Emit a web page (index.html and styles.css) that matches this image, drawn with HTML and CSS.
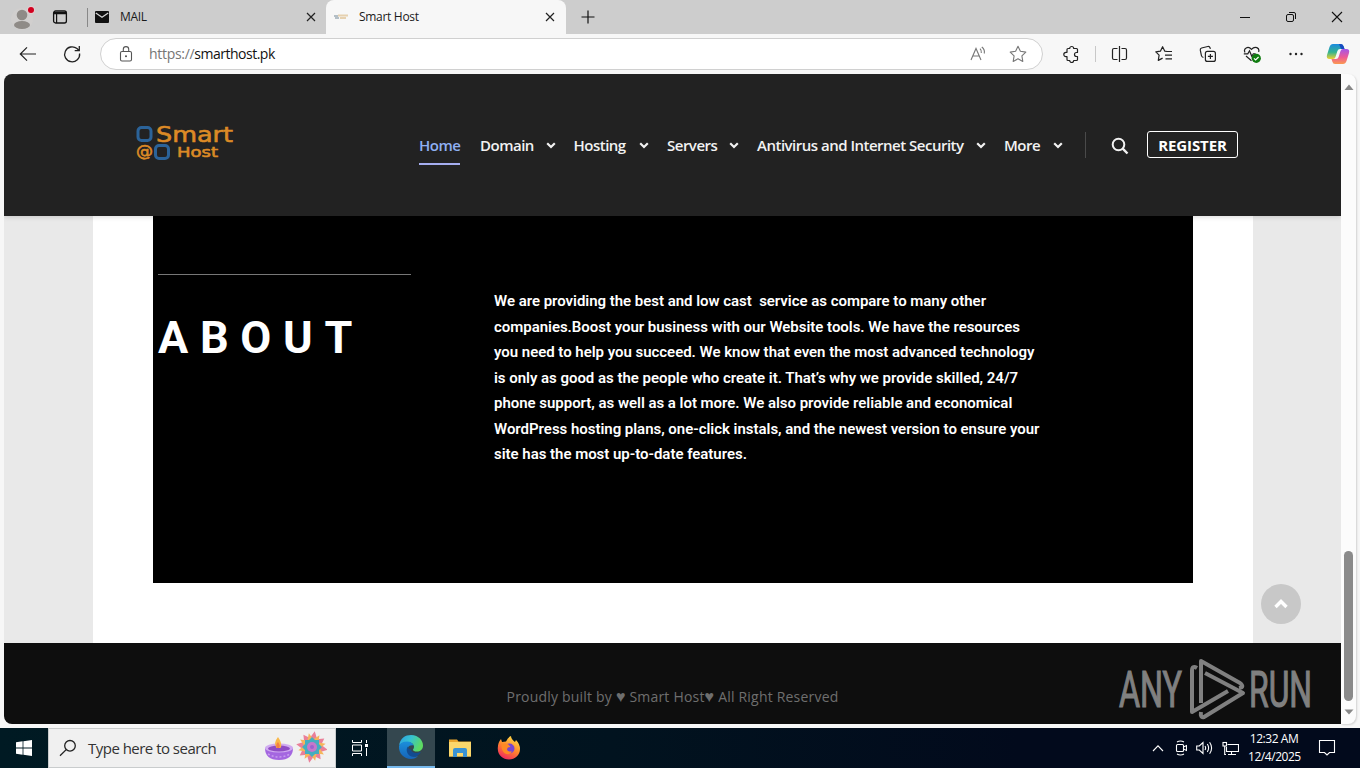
FILE: index.html
```html
<!DOCTYPE html>
<html lang="en">
<head>
    <meta charset="UTF-8">
    <meta name="viewport" content="width=device-width, initial-scale=1.0">
    <title>Smart Host</title>
    <link rel="stylesheet" href="styles.css">
</head>
<body>
    <div class="tabstrip">
        <svg class="avatar" width="26" height="26" viewBox="0 0 26 26">
            <circle cx="13" cy="13" r="11" fill="#d1cfce"/>
            <circle cx="13" cy="9" r="5.300" fill="#8f8b87"/>
            <ellipse cx="13" cy="19" rx="8" ry="4" fill="#8f8b87"/>
            <circle cx="22" cy="4" r="4" fill="#e3cdcf"/>
            <circle cx="22" cy="4" r="3" fill="#d1001f"/>
        </svg>
        <svg class="workspace" width="16" height="16" viewBox="0 0 16 16" fill="none" stroke="#111">
            <rect x="1.6" y="2" width="12.8" height="12" rx="2" stroke-width="1.3"/>
            <path d="M2 3.6h12M2 4.6h12M4.6 5v9" stroke-width="1.2"/>
        </svg>
        <div class="tab tab-mail">
            <svg width="14" height="12" viewBox="0 0 14 12"><path d="M1 0h12q1 0 1 1v10q0 1-1 1H1q-1 0-1-1V1q0-1 1-1z" fill="#111"/><path d="M.8 2l6.200 4.300L13.200 2" fill="none" stroke="#d5d5d5" stroke-width="1.300"/></svg>
            <span>MAIL</span>
            <svg class="close" width="10" height="10" viewBox="0 0 10 10"><path d="M1 1l8 8M9 1l-8 8" stroke="#222" stroke-width="1.2"/></svg>
        </div>
        <div class="tab tab-active">
            <svg width="16" height="8" viewBox="0 0 16 8"><path d="M0 3h4M1 5h4" stroke="#b4bfc6" stroke-width="2"/><path d="M4 2.500h10M6 5h6" stroke="#e6d1b0" stroke-width="2"/></svg>
            <span>Smart Host</span>
            <svg class="close" width="10" height="10" viewBox="0 0 10 10"><path d="M1 1l8 8M9 1l-8 8" stroke="#222" stroke-width="1.2"/></svg>
        </div>
        <svg class="new-tab" width="14" height="14" viewBox="0 0 14 14"><path d="M7 .5v13M.5 7h13" stroke="#111" stroke-width="1.2"/></svg>
        <div class="window-buttons">
            <svg width="12" height="12" viewBox="0 0 12 12"><path d="M1 6.500h10" stroke="#111"/></svg>
            <svg width="12" height="12" viewBox="0 0 12 12" fill="none" stroke="#111"><rect x="1.500" y="3.500" width="7" height="7" rx="1.500"/><path d="M4 1.500h5q1.500 0 1.500 1.500v5"/></svg>
            <svg width="12" height="12" viewBox="0 0 12 12"><path d="M1 1l10 10M11 1L1 11" stroke="#111" stroke-width="1.1"/></svg>
        </div>
    </div>

    <div class="toolbar">
        <svg width="20" height="20" viewBox="0 0 20 20" fill="none" stroke="#222" stroke-width="1.2"><path d="M18 10H2.500M9 3.300L2.300 10 9 16.700"/></svg>
        <svg class="reload" width="20" height="20" viewBox="0 0 20 20" fill="none" stroke="#222" stroke-width="1.3"><path d="M17.600 9.500A7.500 7.500 0 1 1 15 4.600l1.800 1.800M17.300 2v4.600h-4.600"/></svg>
        <div class="address">
            <svg width="14" height="16" viewBox="0 0 14 16" fill="none" stroke="#555" stroke-width="1.100"><rect x="1.500" y="5.500" width="11" height="9.500" rx="1.500"/><path d="M4.300 5.500V3.300a2.700 2.700 0 0 1 5.400 0v2.200"/><circle cx="7" cy="10.300" r=".5" fill="#555"/></svg>
            <p class="url"><span class="scheme">https://</span>smarthost.pk</p>
            <svg class="read-aloud" width="18" height="16" viewBox="0 0 18 16" fill="none" stroke="#777" stroke-width="1.1"><path d="M2 14L7 2.500 12 14M3.700 10h6.600M11 2.700q1.800 1.800 1.300 4.300M12.800 1q3.400 2.800 2.400 6.500"/></svg>
            <svg width="18" height="18" viewBox="0 0 18 18" fill="none" stroke="#777" stroke-width="1.100" stroke-linejoin="round"><path d="M9 1.300l2.400 5 5.400.8-3.900 3.800.9 5.500L9 13.800l-4.800 2.600.9-5.500-3.900-3.800 5.400-.8z"/></svg>
        </div>
        <div class="tools">
            <svg width="18" height="18" viewBox="0 0 18 18" fill="none" stroke="#222" stroke-width="1.2" stroke-linejoin="round"><path d="M6 3.500h1.700a2 2 0 0 1 4 0h2.800q1 0 1 1v3h-1a2 2 0 0 0 0 4h1v3q0 1-1 1h-2.800a2 2 0 0 1-4 0H6q-1 0-1-1v-2.800H4a2.200 2.200 0 0 1 0-4.400h1V4.500q0-1 1-1z"/></svg>
            <i class="divider"></i>
            <svg width="18" height="18" viewBox="0 0 18 18" fill="none" stroke="#222" stroke-width="1.2"><path d="M8.500 1v16M6.500 3.500H3q-1.500 0-1.500 1.500v8q0 1.500 1.500 1.500h3.500M10.500 3.500H14q1.500 0 1.500 1.500v8q0 1.500-1.500 1.500h-3.500"/></svg>
            <svg width="18" height="18" viewBox="0 0 18 18" fill="none" stroke="#222" stroke-width="1.2" stroke-linejoin="round"><path d="M12 6.500l-2.200-.3L7.600 1.700 5.400 6.200l-4.600.7 3.300 3.300-.8 5.200 4.300-2.300M11.500 6.500H17M10 10.200h7M10.500 13.800H17"/></svg>
            <svg width="18" height="18" viewBox="0 0 18 18" fill="none" stroke="#222" stroke-width="1.2"><rect x="6.400" y="6.400" width="10" height="10" rx="2"/><path d="M11.400 8.900v5M8.900 11.400h5M4.400 12.500Q2.700 12 2.400 10.500L1.300 5.200Q1 3.500 2.600 3l6.200-1.500q1.700-.3 2.200 1.200l.4 1.200"/></svg>
            <svg width="18" height="18" viewBox="0 0 18 18" fill="none" stroke="#222" stroke-width="1.2"><path d="M2 7.500C0 3.500 5 .3 8.500 4.300 12 .3 17 3 15.600 7M.8 8.800h4l1.700-3 2.300 5.500 1.500-2.500h2.400M3 11l5.500 4.800"/><circle cx="13.300" cy="13.300" r="4.600" fill="#107c10" stroke="none"/><path d="M11 13.400l1.600 1.600 3-3" stroke="#fff"/></svg>
            <svg width="18" height="18" viewBox="0 0 18 18" fill="#222"><circle cx="3.500" cy="9" r="1.200"/><circle cx="9" cy="9" r="1.200"/><circle cx="14.500" cy="9" r="1.200"/></svg>
            <svg class="copilot" width="24" height="22" viewBox="0 0 24 22">
                <defs>
                    <linearGradient id="cpLeft" x1="0" y1="0" x2="0" y2="1"><stop offset="0" stop-color="#1a8ae0"/><stop offset=".55" stop-color="#35b48f"/><stop offset="1" stop-color="#f0d030"/></linearGradient>
                    <linearGradient id="cpRight" x1="0" y1="0" x2="0" y2="1"><stop offset="0" stop-color="#a456e8"/><stop offset=".55" stop-color="#ee5a96"/><stop offset="1" stop-color="#fb9a50"/></linearGradient>
                </defs>
                <path d="M7 1h8q2 0 2.700 2.500L18.500 6H14q-2 0-2.600 2L9.500 14q-.6 2-2.500 2H3.500q-3.500 0-2.500-4L3.500 4Q4.500 1 7 1z" fill="url(#cpLeft)"/>
                <path d="M13 1h2q2 0 2.700 2.500L18.500 6H15z" fill="#174bc0"/>
                <path d="M17 21H9q-2 0-2.700-2.500L5.500 16H10q2 0 2.600-2L14.500 8q.6-2 2.500-2h3.500q3.500 0 2.500 4l-2.500 8q-1 3-3.500 3z" fill="url(#cpRight)"/>
            </svg>
        </div>
    </div>

    <div class="viewport">
        <div class="page">
            <header class="site-header">
                <svg class="logo" width="100" height="40" viewBox="0 0 100 40">
                    <rect x="2" y="6.500" width="13" height="13" rx="3.500" fill="none" stroke="#2b6399" stroke-width="3"/>
                    <rect x="19.500" y="24.500" width="13" height="13" rx="3.500" fill="none" stroke="#2b6399" stroke-width="3"/>
                    <text x="20" y="21" class="logo-text" font-size="21" textLength="77" lengthAdjust="spacingAndGlyphs">Smart</text>
                    <text x="0" y="35" class="logo-text" font-size="16" textLength="17" lengthAdjust="spacingAndGlyphs">@</text>
                    <text x="41" y="36" class="logo-text" font-size="14" textLength="41" lengthAdjust="spacingAndGlyphs">Host</text>
                </svg>
                <nav class="menu">
                    <a class="current"><span>Home</span></a>
                    <a><span>Domain</span><svg width="10" height="7" viewBox="0 0 10 7"><path d="M1.200 1.200L5 5l3.800-3.800"/></svg></a>
                    <a><span>Hosting</span><svg width="10" height="7" viewBox="0 0 10 7"><path d="M1.200 1.200L5 5l3.800-3.800"/></svg></a>
                    <a><span>Servers</span><svg width="10" height="7" viewBox="0 0 10 7"><path d="M1.200 1.200L5 5l3.800-3.800"/></svg></a>
                    <a><span>Antivirus and Internet Security</span><svg width="10" height="7" viewBox="0 0 10 7"><path d="M1.200 1.200L5 5l3.800-3.800"/></svg></a>
                    <a><span>More</span><svg width="10" height="7" viewBox="0 0 10 7"><path d="M1.200 1.200L5 5l3.800-3.800"/></svg></a>
                </nav>
                <i class="menu-divider"></i>
                <svg class="search-icon" width="18" height="18" viewBox="0 0 18 18" fill="none" stroke="#f2f2f2" stroke-width="2"><circle cx="7.500" cy="7.500" r="5.800"/><path d="M11.700 11.700l4.800 4.800" stroke-width="2.400"/></svg>
                <a class="register">REGISTER</a>
            </header>

            <main class="content">
                <section class="about">
                    <div class="about-title">
                        <h2>ABOUT</h2>
                    </div>
                    <p class="about-text">
                        We are providing the best and low cast&nbsp; service as compare to many other<br>
                        companies.Boost your business with our Website tools. We have the resources<br>
                        you need to help you succeed. We know that even the most advanced technology<br>
                        is only as good as the people who create it. That’s why we provide skilled, 24/7<br>
                        phone support, as well as a lot more. We also provide reliable and economical<br>
                        WordPress hosting plans, one-click instals, and the newest version to ensure your<br>
                        site has the most up-to-date features.
                    </p>
                </section>
            </main>

            <footer class="site-footer">Proudly built by <b>♥</b> Smart Host<b>♥</b> All Right Reserved</footer>

            <a class="to-top"><svg width="16" height="11" viewBox="0 0 16 11"><path d="M2.500 8L8 2.500 13.500 8" fill="none" stroke="#fff" stroke-width="3.400"/></svg></a>

            <svg class="watermark" width="212" height="66" viewBox="0 0 212 66">
                <text x="2" y="51" textLength="63" lengthAdjust="spacingAndGlyphs">ANY</text>
                <text x="132" y="51" textLength="63" lengthAdjust="spacingAndGlyphs">RUN</text>
                <g fill="none" stroke="#808080" stroke-width="4" stroke-linejoin="round">
                    <path d="M80 12q-5-3-5 3v41l36-21"/>
                    <path d="M84 47V5l39 22q5 4-1 5"/>
                    <path d="M88 17l38 20-39 24q-4 1-3-5"/>
                </g>
            </svg>
        </div>
        <div class="scrollbar">
            <svg width="10" height="6" viewBox="0 0 10 6"><path d="M5 .5L9.500 6H.5z" fill="#888"/></svg>
            <div class="thumb"></div>
            <svg width="10" height="6" viewBox="0 0 10 6"><path d="M5 5.500L.5.500h9z" fill="#888"/></svg>
        </div>
    </div>

    <div class="taskbar">
        <div class="start">
            <svg width="16" height="16" viewBox="0 0 16 16" fill="#fff"><path d="M0 2.200l6.600-.9v6.300H0zM7.400 1.200L16 0v7.600H7.400zM0 8.400h6.600v6.300L0 13.800zM7.400 8.400H16V16l-8.600-1.200z"/></svg>
        </div>
        <div class="search-box">
            <svg width="18" height="18" viewBox="0 0 18 18" fill="none" stroke="#222" stroke-width="1.300"><circle cx="11" cy="6.800" r="5.300"/><path d="M7.200 10.600L1 16.800"/></svg>
            <span>Type here to search</span>
            <svg class="festival" width="64" height="34" viewBox="0 0 64 34">
                <path d="M2 17h28q0 12-14 12T2 17z" fill="#a466e0"/>
                <ellipse cx="16" cy="17" rx="14" ry="4.500" fill="#d0abf0"/>
                <ellipse cx="16" cy="17.500" rx="11" ry="3" fill="#8f4cc4"/>
                <path d="M5 23q11 6 22 0" fill="none" stroke="#c79bee" stroke-width="1.500" stroke-dasharray="2 2"/>
                <path d="M15 6q5 7 2.500 11h-4Q10 12 15 6z" fill="#f9b84a"/>
                <path d="M15 11q3 4 1 6h-2q-2-3 1-6z" fill="#f28045"/>
                <g transform="translate(49 16)">
                    <g transform="rotate(10)" fill="#ea7f98"><path d="M0-16L5-6H-5zM0 16L5 6H-5zM16 0L6 5V-5zM-16 0L-6 5V-5z"/></g>
                    <g transform="rotate(55)" fill="#ea7f98"><path d="M0-15L5-6H-5zM0 15L5 6H-5zM15 0L6 5V-5zM-15 0L-6 5V-5z"/></g>
                    <g transform="rotate(32)" fill="#f5b55a"><path d="M0-14L4-5H-4zM0 14L4 5H-4zM14 0L5 4V-4zM-14 0L-5 4V-4z"/></g>
                    <g transform="rotate(77)" fill="#f5b55a"><path d="M0-14L4-5H-4zM0 14L4 5H-4zM14 0L5 4V-4zM-14 0L-5 4V-4z"/></g>
                    <path d="M-7-7H7V7H-7zM0-10L10 0 0 10-10 0z" fill="#45adc0"/>
                    <circle r="5" fill="#c578cb"/><circle r="2" fill="#9a62cf"/>
                </g>
            </svg>
        </div>
        <div class="app task-view">
            <svg width="18" height="16" viewBox="0 0 18 16" fill="none" stroke="#fff"><path d="M1.500 0v2.500h9V0M1.500 16v-2.500h9V16M1.500 5h9v6h-9zM15.500 0v3M15.500 8v8"/><path d="M14 4h3v3h-3z" fill="#fff" stroke="none"/></svg>
        </div>
        <div class="app app-active">
            <svg width="26" height="26" viewBox="0 0 26 26">
                <defs>
                    <linearGradient id="edgeTop" x1="0" y1="0" x2="1" y2=".4"><stop offset="0" stop-color="#2a9be4"/><stop offset=".5" stop-color="#36c2d0"/><stop offset="1" stop-color="#5dda62"/></linearGradient>
                    <linearGradient id="edgeLow" x1="0" y1="0" x2="0" y2="1"><stop offset="0" stop-color="#1b8fdb"/><stop offset="1" stop-color="#1664b8"/></linearGradient>
                </defs>
                <path d="M1 12C2 4 7.500 1 13 1c8 0 12 6 12 10.500 0 4-3 6-6 6-2.500 0-4-.8-4-1.800 0-.7 1-1.200 1-3 0-2.200-2.500-4.700-6-4.700-4 0-8 1.500-9 4z" fill="url(#edgeTop)"/>
                <path d="M1 12c1-3 4-4.500 8-4.500 3.500 0 6 2 6.500 4-5-1-6.500 3-5.500 6 1.200 4 6 6.500 10 4.500Q17.500 25 13 25C6 25 .5 19.500 1 12z" fill="url(#edgeLow)"/>
                <path d="M10 12.500q-2 2-1 5.500c1.500 5 8 7 13 1.500q1-.8.3-1.500c-4.500 2-9 .5-9.300-2.500-3-.5-2.500-2-3-3z" fill="#124c91"/>
            </svg>
        </div>
        <div class="app">
            <svg width="22" height="20" viewBox="0 0 22 20"><path d="M0 1.500h8l1.500 2H22v15H0z" fill="#e9a52c"/><path d="M0 4h22v14.500H0z" fill="#fbd76b"/><path d="M4 19v-7q0-2 2-2h10q2 0 2 2v7h-4v-4H8v4z" fill="#3992d3"/></svg>
        </div>
        <div class="app">
            <svg width="24" height="24" viewBox="0 0 24 24">
                <defs><linearGradient id="fox" x1=".8" y1="0" x2=".3" y2="1"><stop offset="0" stop-color="#ffe34a"/><stop offset=".5" stop-color="#ff8a2b"/><stop offset="1" stop-color="#f0265e"/></linearGradient></defs>
                <path d="M4 3l1 3 4-.5Q11 1 14 0q0 3 4 6l1-2q4 4 4 9c0 6-5 10.500-11 10.500S.800 19 .8 13Q.5 7 4 3z" fill="url(#fox)"/>
                <circle cx="12.500" cy="12.500" r="5" fill="#7745d2"/>
                <path d="M4.500 8.500q4-2 7 0l2 2.500q-3 0-3.500 2 0 3 5 2.500-2 4-7 2-4-3-3.500-9z" fill="#ff8a24"/>
            </svg>
        </div>
        <div class="tray">
            <svg width="12" height="12" viewBox="0 0 12 12"><path d="M1 9l5-5.200L11 9"/></svg>
            <svg width="12" height="16" viewBox="0 0 12 16"><rect x="1.500" y="4.500" width="7" height="7" rx="1"/><path d="M8.500 7l3-1.500v5l-3-1.500M2 2q3.500-2 7 0M2 14q3.500 2 7 0"/></svg>
            <svg width="17" height="14" viewBox="0 0 17 14"><path d="M.7 5v4h2.600L7 12.500v-11L3.300 5zM9 5q1.300 2 0 4M11.300 3q2.600 4 0 8M13.600 1.300q4 5.700 0 11.400"/></svg>
            <svg width="17" height="15" viewBox="0 0 17 15"><path d="M5.500 3.500h11v7h-12V6M9.500 10.500v3M6 13.500h8"/><rect x="1" y="1.500" width="3.500" height="3.500"/><path d="M2.700 5v8.500H4"/></svg>
            <div class="clock">12:32 AM<br>12/4/2025</div>
            <svg width="18" height="18" viewBox="0 0 18 18"><path d="M1.500 1.500h15v12h-5L9 16l-2.500-2.500h-5z"/></svg>
        </div>
    </div>
</body>
</html>
```

FILE: styles.css
```css
* {
    box-sizing: border-box;
}
body {
    margin: 0;
    width: 1360px;
    height: 768px;
    overflow: hidden;
    background-color: #f7f7f7;
    font-family: "Open Sans", "Noto Sans", sans-serif;
    display: flex;
    flex-direction: column;
}
svg {
    display: block;
    flex: none;
}

/* tabs */
.tabstrip {
    height: 34px;
    background-color: #cdcdcd;
    display: flex;
    align-items: center;
    padding-left: 9px;
    font-size: 12px;
    letter-spacing: -0.3px;
    color: #1a1a1a;
}
.tabstrip span {
    margin-top: -1px;
}
.avatar {
    margin-top: 4px;
}
.workspace {
    margin-left: 17px;
}
.tab {
    height: 34px;
    display: flex;
    align-items: center;
}
.tab .close {
    margin-left: auto;
}
.tab-mail {
    width: 239px;
    margin-left: 19px;
    padding: 0 10px 0 8px;
    gap: 11px;
    background: linear-gradient(#888, #888) 0 8px / 1px 19px no-repeat;
}
.tab-active {
    width: 240px;
    padding: 0 11px 0 8px;
    gap: 9px;
    background-color: #f7f7f7;
    border-radius: 8px 8px 0 0;
}
.new-tab {
    margin-left: 15px;
}
.window-buttons {
    display: flex;
    gap: 34px;
    margin-left: auto;
    padding-right: 17px;
}

/* address bar */
.toolbar {
    height: 40px;
    display: flex;
    align-items: center;
    padding-left: 18px;
}
.reload {
    margin-left: 24px;
}
.address {
    width: 943px;
    height: 32px;
    margin-left: 18px;
    padding: 0 15px 0 18px;
    display: flex;
    align-items: center;
    background-color: #fff;
    border: 1px solid #d0d0d0;
    border-radius: 16px;
}
.url {
    margin: 0 auto 0 16px;
    font-size: 14px;
    letter-spacing: -0.5px;
    line-height: 20px;
    color: #111;
}
.scheme {
    color: #767676;
    letter-spacing: -0.3px;
}
.read-aloud {
    margin-right: 22px;
}
.tools {
    display: flex;
    align-items: center;
    gap: 26px;
    margin-left: 19px;
}
.divider {
    width: 1px;
    height: 16px;
    margin: 0 -11px 0 -11px;
    background-color: #c8c8c8;
}
.copilot {
    margin-left: -5px;
}

/* page */
.viewport {
    height: 654px;
    padding: 0 4px 4px;
    display: flex;
}
.page {
    position: relative;
    width: 1337px;
    height: 650px;
    background-color: #e9e9e9;
    border-radius: 8px 0 0 8px;
    overflow: hidden;
}
.site-header {
    height: 142px;
    background-color: #222;
    display: flex;
    align-items: center;
    padding-left: 132px;
    box-shadow: 0 1px 5px rgba(0, 0, 0, 0.15);
    position: relative;
}
.logo {
    margin-top: -8px;
}
.logo-text {
    font-family: "DejaVu Sans", sans-serif;
    fill: #dc8a26;
    stroke: #dc8a26;
    stroke-width: 0.6px;
}
.menu {
    margin-left: 183px;
    display: grid;
    grid-template-columns: 61px 93.5px 93.5px 90px 247px 59px;
    font-size: 15px;
    font-weight: 600;
    letter-spacing: -0.5px;
    color: #f2f2f2;
}
.menu a {
    height: 40px;
    display: flex;
    align-items: center;
    justify-content: space-between;
    padding-right: 18px;
    border-top: 2px solid transparent;
    border-bottom: 2px solid transparent;
    white-space: nowrap;
}
.menu a:last-child {
    padding-right: 0;
}
.menu svg path {
    fill: none;
    stroke: #f2f2f2;
    stroke-width: 2.2;
}
.menu .current {
    width: 41px;
    padding-right: 0;
    color: #8fb0f2;
    border-bottom-color: #a5aef0;
}
.menu-divider {
    width: 1px;
    height: 26px;
    margin-left: 22px;
    background-color: #4a4a4a;
}
.search-icon {
    margin: 2px 0 0 25px;
}
.register {
    width: 91px;
    height: 27px;
    margin: -2px 0 0 18px;
    border: 1px solid #fff;
    border-radius: 3px;
    color: #fff;
    font-size: 15px;
    font-weight: 700;
    letter-spacing: -0.1px;
    line-height: 27px;
    text-align: center;
}
.content {
    width: 1160px;
    height: 427px;
    margin-left: 89px;
    padding: 0 60px 60px;
    background-color: #fff;
}
.about {
    height: 367px;
    display: flex;
    gap: 83px;
    padding-left: 5px;
    background-color: #000;
    color: #fff;
    font-family: Roboto, sans-serif;
}
.about-title {
    width: 253px;
    margin-top: 58px;
    border-top: 1px solid #777;
}
.about-title h2 {
    margin: 36px 0 0;
    font-size: 45px;
    font-weight: 700;
    line-height: 54px;
    letter-spacing: 11.7px;
}
.about-text {
    margin: 73px 0 0;
    font-size: 15px;
    font-weight: 600;
    line-height: 25.5px;
    letter-spacing: -0.03px;
    white-space: nowrap;
}
.site-footer {
    height: 81px;
    padding-top: 43px;
    background-color: #0e0e0e;
    color: #6e6e6e;
    font-size: 14px;
    letter-spacing: 0.2px;
    line-height: 22px;
    text-align: center;
}
.site-footer b {
    font-size: 16px;
    font-weight: 400;
    line-height: 1;
}
.to-top {
    position: absolute;
    left: 1257px;
    top: 510px;
    width: 40px;
    height: 40px;
    border-radius: 50%;
    background-color: #c8c8c8;
    display: flex;
    align-items: center;
    justify-content: center;
}
.watermark {
    position: absolute;
    left: 1113px;
    top: 582px;
}
.watermark text {
    font-family: Roboto, sans-serif;
    font-size: 50px;
    fill: #808080;
    stroke: #808080;
    stroke-width: 1.2px;
}
.scrollbar {
    width: 15px;
    height: 650px;
    padding: 10px 0 9px;
    display: flex;
    flex-direction: column;
    align-items: center;
    background-color: #fcfcfc;
    border-radius: 0 8px 8px 0;
    box-shadow: 1px 1px 2px rgba(0, 0, 0, 0.15);
}
.thumb {
    width: 9px;
    height: 150px;
    margin: auto 0 8px;
    border-radius: 5px;
    background-color: #8b8b8b;
}

/* taskbar */
.taskbar {
    height: 40px;
    display: flex;
    background: linear-gradient(90deg, #001a23, #01131f 45%, #020a1c 75%);
    color: #fff;
}
.start {
    width: 48px;
    display: flex;
    align-items: center;
    justify-content: center;
}
.search-box {
    width: 288px;
    padding: 0 8px 0 10px;
    display: flex;
    align-items: center;
    background-color: #f0f0f0;
    border: 1px solid #c9cccd;
    color: #333;
    font-size: 15px;
    letter-spacing: -0.52px;
}
.search-box span {
    margin-left: 11px;
}
.festival {
    margin-left: auto;
}
.app {
    width: 49px;
    display: flex;
    align-items: center;
    justify-content: center;
}
.task-view {
    width: 51px;
    padding-right: 3px;
}
.app-active {
    width: 48px;
    background-color: #34474f;
    border-bottom: 2px solid #76b9ed;
}
.tray {
    margin-left: auto;
    padding-right: 24px;
    display: flex;
    align-items: center;
    gap: 9px;
}
.tray path, .tray rect {
    fill: none;
    stroke: #fff;
    stroke-width: 1.1;
}
.tray svg:first-child {
    margin-right: 2px;
}
.clock {
    width: 52px;
    margin: 0 9px 0 0;
    font-size: 12px;
    letter-spacing: -0.45px;
    line-height: 18px;
    text-align: center;
    white-space: nowrap;
}
```
